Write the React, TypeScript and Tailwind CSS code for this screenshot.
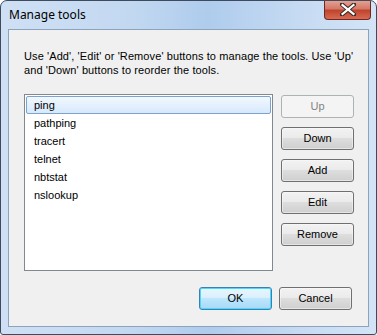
import React from "react";

const tools = ["ping", "pathping", "tracert", "telnet", "nbtstat", "nslookup"];

function Button({
  label,
  disabled,
  primary,
}: {
  label: string;
  disabled?: boolean;
  primary?: boolean;
}) {
  if (disabled) {
    return (
      <div className="w-[73px] h-[23px] flex items-center justify-center rounded-[3px] border border-[#adb2b5] bg-[#f4f4f4] text-[#838383]">
        {label}
      </div>
    );
  }
  if (primary) {
    return (
      <div className="w-[73px] h-[23px] flex items-center justify-center rounded-[3px] border border-[#3c7fb1] bg-[linear-gradient(to_bottom,#eaf6fd_0%,#d9f0fc_45%,#bee6fd_50%,#a7d9f5_100%)] shadow-[inset_0_0_0_1px_#48d9fe] text-black">
        {label}
      </div>
    );
  }
  return (
    <div className="w-[73px] h-[23px] flex items-center justify-center rounded-[3px] border border-[#707070] bg-[linear-gradient(to_bottom,#f2f2f2_0%,#ebebeb_45%,#dddddd_50%,#cfcfcf_100%)] shadow-[inset_0_0_0_1px_#fcfcfc80] text-black">
      {label}
    </div>
  );
}

export default function App() {
  return (
    <div className="w-[377px] h-[335px] bg-white">
      {/* Window frame */}
      <div className="w-[377px] h-[335px] flex flex-col rounded-t-[7px] rounded-b-[3px] border border-[#3d4b5c] bg-[linear-gradient(to_right,#cfe0f4_0%,#c2d8f1_35%,#afcced_55%,#c6dbf3_80%,#d3e4f6_100%)] px-[7px] pb-[7px] overflow-hidden">
        {/* Title bar */}
        <div className="h-[28px] flex items-start relative shrink-0">
          <span className="pt-[6px] pl-[1px] text-[12px] text-black font-['Noto_Sans',sans-serif] leading-[16px]">
            Manage tools
          </span>
          <div className="absolute right-[-2px] top-[-1px] w-[47px] h-[20px] rounded-b-[4px] border border-[#6b2a26] border-t-0 bg-[linear-gradient(to_bottom,#e8a496_0%,#d47a68_45%,#c0442f_55%,#d86a4f_100%)] flex items-center justify-center">
            <svg width="16" height="13" viewBox="0 0 16 13">
              <path
                d="M2 1.5 L8 6.5 L14 1.5 M2 11.5 L8 6.5 L14 11.5"
                stroke="#3a2b2b"
                strokeWidth="4.2"
                fill="none"
                strokeLinecap="square"
              />
              <path
                d="M2.5 2 L8 6.5 L13.5 2 M2.5 11 L8 6.5 L13.5 11"
                stroke="#ffffff"
                strokeWidth="2.2"
                fill="none"
                strokeLinecap="square"
              />
            </svg>
          </div>
        </div>

        {/* Client area */}
        <div className="flex-1 flex flex-col border border-[#8da3bc] bg-[#f0f0f0] font-['Liberation_Sans',Arial,sans-serif] text-[11px] text-black">
          <p className="pt-[19px] pl-[15px] pr-[4px] leading-[14px] tracking-[0.1px]">
            Use 'Add', 'Edit' or 'Remove' buttons to manage the tools. Use 'Up'
            and 'Down' buttons to reorder the tools.
          </p>

          <div className="flex gap-[8px] pl-[15px] pt-[17px]">
            {/* List box */}
            <div className="w-[249px] h-[177px] border border-[#828790] bg-white p-[1px]">
              {tools.map((t, i) => (
                <div
                  key={t}
                  className={
                    i === 0
                      ? "h-[18px] flex items-center pl-[7px] rounded-[2px] border border-[#7da2ce] bg-[linear-gradient(to_bottom,#f2f8fe,#d6e9fd)]"
                      : "h-[18px] flex items-center pl-[8px]"
                  }
                >
                  {t}
                </div>
              ))}
            </div>

            {/* Side buttons */}
            <div className="flex flex-col gap-[9px] pt-[1px]">
              <Button label="Up" disabled />
              <Button label="Down" />
              <Button label="Add" />
              <Button label="Edit" />
              <Button label="Remove" />
            </div>
          </div>

          <div className="flex justify-end gap-[7px] pr-[16px] pt-[16px]">
            <Button label="OK" primary />
            <Button label="Cancel" />
          </div>
        </div>
      </div>
    </div>
  );
}
